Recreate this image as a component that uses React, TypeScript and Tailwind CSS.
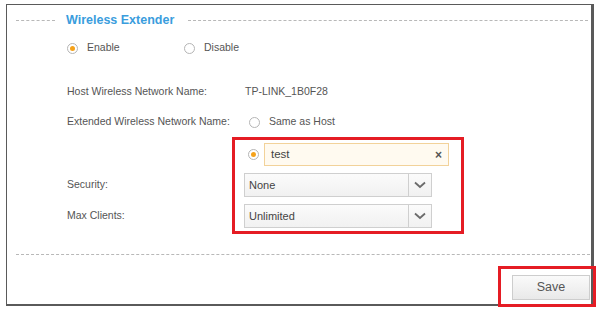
import React from 'react';

function Radio({ checked = false }: { checked?: boolean }) {
  return (
    <span className="w-[11px] h-[11px] rounded-full border border-[#b5b5b5] bg-white flex items-center justify-center shrink-0">
      {checked && <span className="w-[5px] h-[5px] rounded-full bg-[#f5a21b]" />}
    </span>
  );
}

function Chevron() {
  return (
    <svg width="12" height="8" viewBox="0 0 12 8" fill="none">
      <path d="M1 1.5 L6 6 L11 1.5" stroke="#6b6b6b" strokeWidth="1.8" />
    </svg>
  );
}

function Select({ value }: { value: string }) {
  return (
    <div className="w-[188px] h-[24px] border border-[#cfcfcf] bg-gradient-to-b from-[#fbfbfb] to-[#f1f1f1] flex items-stretch">
      <span className="flex-1 flex items-center pl-[4px] text-[11px] text-[#444]">{value}</span>
      <span className="w-[23px] border-l border-[#cfcfcf] flex items-center justify-center">
        <Chevron />
      </span>
    </div>
  );
}

export default function App() {
  return (
    <div
      className="w-[600px] h-[310px] bg-white relative pl-[6px] pt-[4px] overflow-hidden"
      style={{ fontFamily: '"Liberation Sans", Arial, sans-serif' }}
    >
      <div className="w-[588px] h-[302px] border-l border-t border-b-2 border-r-[3px] border-[#5a5a5a] flex flex-col text-[10.5px] text-[#555]">
        {/* legend */}
        <div className="h-[16px] mt-[7px] flex items-center pl-[9px] pr-[3px]">
          <div className="w-[39px] border-t border-dashed border-[#b8b8b8]" />
          <span className="ml-[11px] text-[12.5px] font-bold text-[#3a9ddd]">Wireless Extender</span>
          <div className="ml-[14px] flex-1 border-t border-dashed border-[#b8b8b8]" />
        </div>

        {/* enable / disable */}
        <div className="h-[16px] mt-[12px] flex items-center pl-[60px]">
          <div className="w-[117px] flex items-center">
            <Radio checked />
            <span className="ml-[9px]">Enable</span>
          </div>
          <Radio />
          <span className="ml-[9px]">Disable</span>
        </div>

        {/* host name */}
        <div className="h-[16px] mt-[28px] flex items-center pl-[60px]">
          <span className="w-[177px]">Host Wireless Network Name:</span>
          <span className="pl-px">TP-LINK_1B0F28</span>
        </div>

        {/* extended name */}
        <div className="h-[16px] mt-[14px] flex items-center pl-[60px]">
          <span className="w-[177px]">Extended Wireless Network Name:</span>
          <div className="flex items-center pl-[5px]">
            <Radio />
            <span className="ml-[9px]">Same as Host</span>
          </div>
        </div>

        {/* custom name input */}
        <div className="h-[23px] mt-[13px] flex items-center pl-[237px]">
          <div className="pl-[4px] flex items-center">
            <Radio checked />
          </div>
          <div className="ml-[5px] w-[185px] h-[23px] border border-[#f2d29a] bg-[#fffaf0] flex items-center px-[6px]">
            <span className="flex-1 text-[11.5px] text-[#444]">test</span>
            <span className="text-[12px] font-bold text-[#555] leading-none">×</span>
          </div>
        </div>

        {/* security */}
        <div className="h-[24px] mt-[7px] flex items-center pl-[60px]">
          <span className="w-[177px]">Security:</span>
          <Select value="None" />
        </div>

        {/* max clients */}
        <div className="h-[24px] mt-[7px] flex items-center pl-[60px]">
          <span className="w-[177px]">Max Clients:</span>
          <Select value="Unlimited" />
        </div>

        <div className="mt-[26px] ml-[9px] mr-px border-t border-dashed border-[#b8b8b8]" />

        <div className="mt-[20px] flex justify-end pr-px">
          <button className="w-[78px] h-[25px] border border-[#cdcdcd] bg-gradient-to-b from-[#fafafa] to-[#e9e9e9] text-[12.5px] text-[#555]">
            Save
          </button>
        </div>
      </div>

      {/* annotation boxes */}
      <div className="absolute left-[232px] top-[137px] w-[232px] h-[97px] border-[3px] border-[#e51c24]" />
      <div className="absolute left-[498px] top-[266px] w-[98px] h-[41px] border-[3px] border-[#e51c24]" />
    </div>
  );
}
